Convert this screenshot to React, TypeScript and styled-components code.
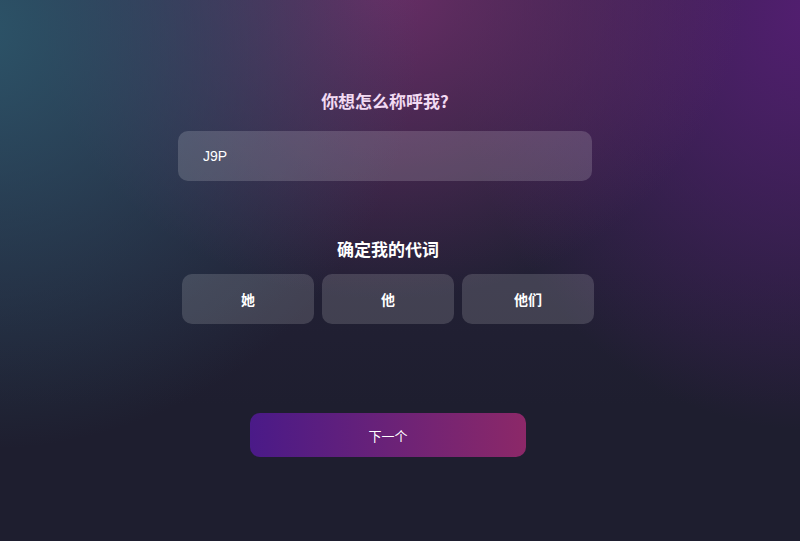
import React, { useState } from "react";
import styled, { createGlobalStyle } from "styled-components";

const GlobalStyle = createGlobalStyle`
  html, body {
    margin: 0;
    padding: 0;
    height: 100%;
  }
  body {
    font-family: "Liberation Sans", "Noto Sans CJK SC", sans-serif;
    background: #1e1e2f;
  }
`;

const pronouns = ["她", "他", "他们"];

function App() {
  const [name, setName] = useState("J9P");
  const [pronoun, setPronoun] = useState<string | null>(null);

  return (
    <Page>
      <GlobalStyle />
      <Form>
        <Section>
          <Heading $tint="#f2daf2">你想怎么称呼我?</Heading>
          <NameInput
            type="text"
            value={name}
            onChange={(e) => setName(e.target.value)}
          />
        </Section>

        <Section $gap={14}>
          <Heading $tint="#ffffff" $offset={6}>
            确定我的代词
          </Heading>
          <Choices>
            {pronouns.map((p) => (
              <Choice
                key={p}
                $active={pronoun === p}
                onClick={() => setPronoun(p)}
              >
                {p}
              </Choice>
            ))}
          </Choices>
        </Section>

        <NextButton>下一个</NextButton>
      </Form>
    </Page>
  );
}

const Page = styled.main`
  width: 800px;
  height: 541px;
  overflow: hidden;
  background-color: #1e1e2f;
  background-image:
    radial-gradient(ellipse 440px 420px at -20px 30px, rgba(44, 86, 106, 0.95), rgba(44, 86, 106, 0) 100%),
    radial-gradient(ellipse 360px 320px at 385px -20px, rgba(108, 46, 104, 0.95), rgba(108, 46, 104, 0) 100%),
    radial-gradient(ellipse 360px 420px at 810px 10px, rgba(82, 30, 112, 1), rgba(82, 30, 112, 0) 100%),
    linear-gradient(180deg, #2a2440 0%, #1e1e2f 75%);
  display: flex;
  justify-content: center;
`;

const Form = styled.div`
  width: 414px;
  margin-right: 30px;
  padding-top: 90px;
  display: flex;
  flex-direction: column;
  align-items: stretch;
`;

const Section = styled.section<{ $gap?: number }>`
  display: flex;
  flex-direction: column;
  align-items: stretch;
  gap: ${(p) => p.$gap ?? 19}px;
  margin-bottom: 57px;
`;

const Heading = styled.h2<{ $tint: string; $offset?: number }>`
  margin: 0;
  padding-left: ${(p) => p.$offset ?? 0}px;
  text-align: center;
  font-family: "Noto Sans CJK SC", sans-serif;
  font-size: 17px;
  font-weight: 700;
  line-height: 22px;
  color: ${(p) => p.$tint};
`;

const NameInput = styled.input`
  box-sizing: border-box;
  height: 50px;
  width: 100%;
  padding: 0 25px;
  border: none;
  border-radius: 10px;
  background: rgba(255, 255, 255, 0.16);
  color: #ffffff;
  font-family: "Liberation Sans", sans-serif;
  font-size: 14px;
  outline: none;
`;

const Choices = styled.div`
  display: grid;
  grid-template-columns: repeat(3, 132px);
  gap: 8px;
  justify-content: start;
  padding-left: 4px;
`;

const Choice = styled.button<{ $active: boolean }>`
  height: 50px;
  border: none;
  border-radius: 10px;
  background: ${(p) =>
    p.$active ? "rgba(255, 255, 255, 0.28)" : "rgba(255, 255, 255, 0.15)"};
  color: #ffffff;
  font-family: "Noto Sans CJK SC", sans-serif;
  font-size: 14px;
  font-weight: 700;
  cursor: pointer;
`;

const NextButton = styled.button`
  align-self: center;
  width: 276px;
  height: 44px;
  margin-top: 32px;
  margin-left: 6px;
  border: none;
  border-radius: 10px;
  background: linear-gradient(90deg, #4a1a88 0%, #6a2278 50%, #8c2868 100%);
  color: #ffffff;
  font-family: "Noto Sans CJK SC", sans-serif;
  font-size: 13px;
  cursor: pointer;
`;

export default App;
